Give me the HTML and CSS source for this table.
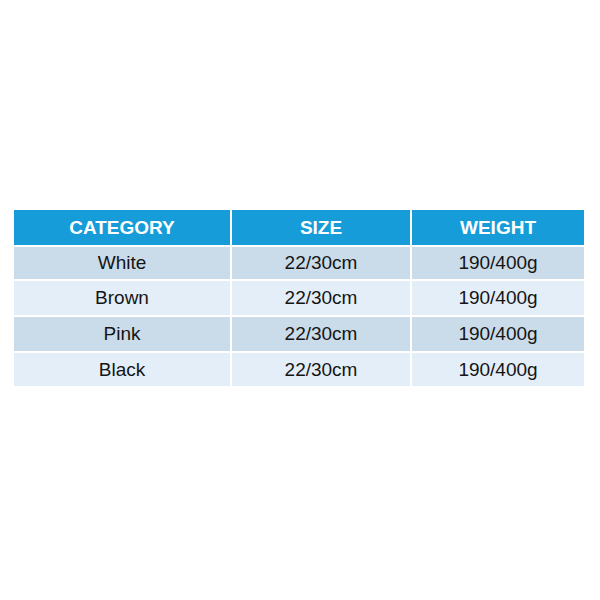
FILE: index.html
```html
<!DOCTYPE html>
<html>
<head>
<meta charset="utf-8">
<link rel="stylesheet" href="styles.css">
</head>
<body>
<div class="page">
  <div class="table">
    <div class="cell head">CATEGORY</div>
    <div class="cell head">SIZE</div>
    <div class="cell head">WEIGHT</div>

    <div class="cell odd r1">White</div>
    <div class="cell odd r1">22/30cm</div>
    <div class="cell odd r1">190/400g</div>

    <div class="cell even r2">Brown</div>
    <div class="cell even r2">22/30cm</div>
    <div class="cell even r2">190/400g</div>

    <div class="cell odd r3">Pink</div>
    <div class="cell odd r3">22/30cm</div>
    <div class="cell odd r3">190/400g</div>

    <div class="cell even r4">Black</div>
    <div class="cell even r4">22/30cm</div>
    <div class="cell even r4">190/400g</div>
  </div>
</div>
</body>
</html>
```
FILE: styles.css
```css
html, body {
  margin: 0;
  padding: 0;
  background: #ffffff;
}
.page {
  width: 600px;
  height: 600px;
  padding: 210px 0 0 14px;
  box-sizing: border-box;
}
.table {
  display: grid;
  grid-template-columns: 216px 178px 172px;
  grid-template-rows: 34px 33px 34px 34px 33px;
  column-gap: 2px;
  row-gap: 2px;
  font-family: "Liberation Sans", Arial, sans-serif;
}
.cell {
  display: flex;
  align-items: center;
  justify-content: center;
  font-size: 19px;
  color: #151515;
}
.head {
  background: #159cd9;
  color: #ffffff;
  font-weight: bold;
  margin-bottom: -1px;
}
.r1 {
  margin-top: 1px;
}
.odd {
  background: #cadcea;
}
.even {
  background: #e3eef9;
}
```
